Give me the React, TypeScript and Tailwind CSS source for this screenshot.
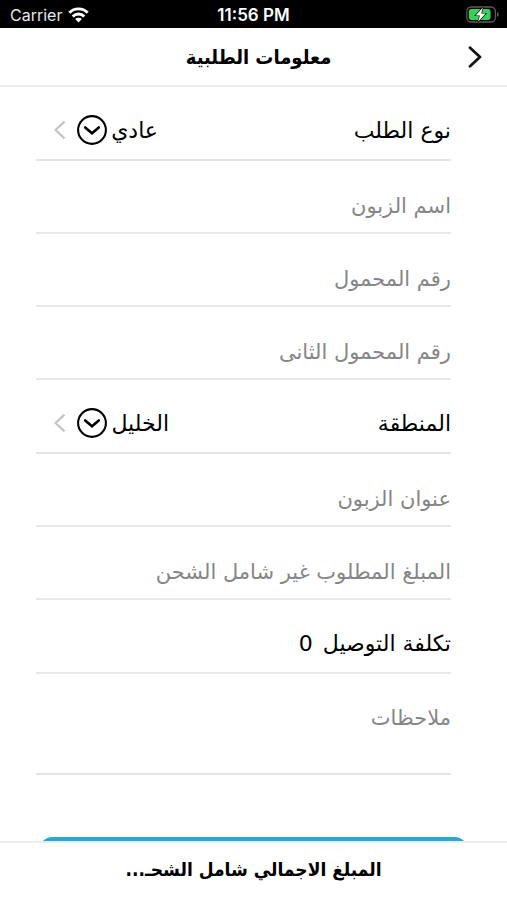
import { useState } from "react";

function WifiIcon() {
  return (
    <svg width="21" height="16" viewBox="0 0 21 16" fill="none" stroke="white" strokeWidth="2.9" aria-hidden="true">
      <path d="M1.3 5.7a13 13 0 0 1 18.4 0" />
      <path d="M4.7 9.4a8.2 8.2 0 0 1 11.6 0" />
      <path d="M10.5 15.4 7.2 12a4.7 4.7 0 0 1 6.6 0z" fill="white" stroke="none" />
    </svg>
  );
}

function BatteryIcon() {
  return (
    <svg width="33" height="17" viewBox="0 0 33 17" aria-hidden="true">
      <rect x="0.8" y="1" width="28.6" height="15" rx="4.5" fill="none" stroke="#5c5c5e" strokeWidth="1.3" />
      <rect x="2.8" y="3" width="21.8" height="11" rx="2.4" fill="#34d058" />
      <path d="M31 6v5c1.2-.5 1.7-1.4 1.7-2.5S32.2 6.5 31 6z" fill="#5c5c5e" />
      <path
        d="M16.8 1.4 9.6 9.4h4.3l-1.8 6.4 7.6-8.2h-4.4z"
        fill="white"
        stroke="black"
        strokeWidth="1.2"
        paintOrder="stroke"
      />
    </svg>
  );
}

function StatusBar() {
  return (
    <div dir="ltr" className="grid h-7 grid-cols-3 items-center bg-black px-2 pt-px font-['Inter',sans-serif] leading-5 text-white">
      <div className="flex items-center gap-1.5 pl-0.5 text-base leading-5 text-gray-200">
        Carrier
        <WifiIcon />
      </div>
      <div className="text-center text-[17px] leading-5 font-semibold whitespace-nowrap">11:56 PM</div>
      <div className="flex justify-end">
        <BatteryIcon />
      </div>
    </div>
  );
}

function TextRow({ id, label }: { id: string; label: string }) {
  return (
    <div className="h-[73px] border-b-2 border-[#e8e8e8] pt-[18px]">
      <input
        id={id}
        aria-label={label}
        placeholder={label}
        className="h-full w-full bg-transparent text-[21px] text-black outline-none placeholder:text-[#868686]"
      />
    </div>
  );
}

function SelectRow({ id, label, options }: { id: string; label: string; options: string[] }) {
  const [value, setValue] = useState(options[0]);

  return (
    <div className="flex h-[74px] items-center justify-between border-b-2 border-[#e4e4e4] pt-3.5">
      <label htmlFor={id}>{label}</label>
      <div className="flex items-center pl-[18px]">
        <select
          id={id}
          value={value}
          onChange={(e) => setValue(e.target.value)}
          className="appearance-none bg-transparent outline-none"
        >
          {options.map((o) => (
            <option key={o}>{o}</option>
          ))}
        </select>
        <svg width="30" height="30" viewBox="0 0 30 30" fill="none" stroke="black" className="mr-1" aria-hidden="true">
          <circle cx="15" cy="15" r="13.9" strokeWidth="2.1" />
          <path d="m8.2 12.4 6.8 5.9 6.800-5.900" strokeWidth="2.6" strokeLinecap="round" />
        </svg>
        <svg width="12" height="20" viewBox="0 0 12 20" fill="none" stroke="#c4c4c6" strokeWidth="2.2" className="mr-[11px]" aria-hidden="true">
          <path d="M10.5 1.6 1.5 10l9 8.400" />
        </svg>
      </div>
    </div>
  );
}

export default function App() {
  return (
    <div dir="rtl" className="flex h-screen flex-col bg-white font-['DejaVu_Sans',sans-serif] text-[22px] text-black">
      <StatusBar />

      <header className="grid h-[59px] grid-cols-[40px_1fr_50px] items-center border-b-2 border-[#ececec] px-3">
        <button aria-label="رجوع" className="flex h-10 items-center justify-center">
          <svg width="14" height="22" viewBox="0 0 14 22" fill="none" stroke="#151515" strokeWidth="2.8" strokeLinecap="round" strokeLinejoin="round">
            <path d="m2 1.8 10 9.2-10 9.200" />
          </svg>
        </button>
        <h1 className="text-center font-['DejaVu_Sans_Condensed','DejaVu_Sans',sans-serif] text-xl font-semibold">
          معلومات الطلبية
        </h1>
      </header>

      <main className="min-h-0 flex-1 overflow-hidden">
        <form onSubmit={(e) => e.preventDefault()}>
          <div className="pr-14 pl-9">
            <SelectRow id="type" label="نوع الطلب" options={["عادي"]} />
            <TextRow id="name" label="اسم الزبون" />
            <TextRow id="phone" label="رقم المحمول" />
            <TextRow id="phone2" label="رقم المحمول الثانى" />
            <SelectRow id="area" label="المنطقة" options={["الخليل"]} />
            <TextRow id="address" label="عنوان الزبون" />
            <TextRow id="amount" label="المبلغ المطلوب غير شامل الشحن" />
            <div className="flex h-[74px] items-center gap-2.5 border-b-2 border-[#e8e8e8] pt-3.5">
              <span>تكلفة التوصيل</span>
              <span>0</span>
            </div>
            <div className="h-[101px] border-b-2 border-[#e4e4e4] pt-[29px]">
              <textarea
                aria-label="ملاحظات"
                placeholder="ملاحظات"
                className="h-full w-full resize-none bg-transparent text-[21px] outline-none placeholder:text-[#868686]"
              />
            </div>
          </div>
          <div className="px-10 pt-[62px]">
            <button aria-label="حفظ" className="h-14 w-full rounded-xl bg-[#22a9d6]" />
          </div>
        </form>
      </main>

      <footer className="flex h-[59px] items-center justify-center border-t-2 border-[#ececec] pb-1 font-['DejaVu_Sans_Condensed','DejaVu_Sans',sans-serif] text-[19px] font-semibold">
        المبلغ الاجمالي شامل الشحـ...
      </footer>
    </div>
  );
}
